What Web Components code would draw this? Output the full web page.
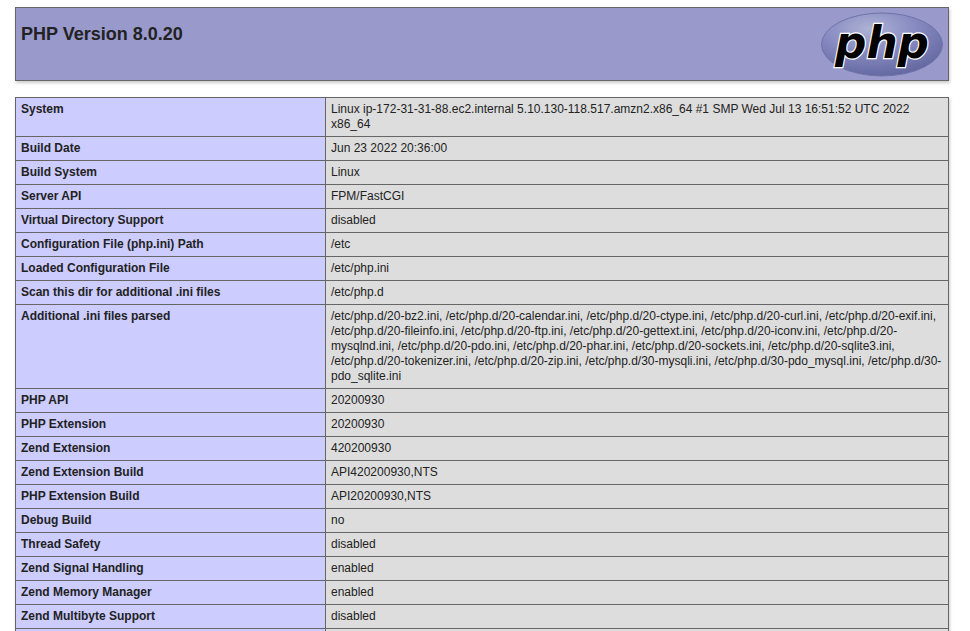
<!DOCTYPE html>
<html><head><meta charset="utf-8"><title>phpinfo()</title>
<style>
html,body{margin:0;padding:0;background:#fff;height:631px;overflow:hidden}
body{color:#222;font:12px/15px "Liberation Sans",Arial,sans-serif}
</style></head><body>
<php-page>
<php-header version="PHP Version 8.0.20"></php-header>
<php-table>
<php-row k="System">Linux ip-172-31-31-88.ec2.internal 5.10.130-118.517.amzn2.x86_64 #1 SMP Wed Jul 13 16:51:52 UTC 2022 x86_64</php-row>
<php-row k="Build Date">Jun 23 2022 20:36:00</php-row>
<php-row k="Build System">Linux</php-row>
<php-row k="Server API">FPM/FastCGI</php-row>
<php-row k="Virtual Directory Support">disabled</php-row>
<php-row k="Configuration File (php.ini) Path">/etc</php-row>
<php-row k="Loaded Configuration File">/etc/php.ini</php-row>
<php-row k="Scan this dir for additional .ini files">/etc/php.d</php-row>
<php-row k="Additional .ini files parsed">/etc/php.d/20-bz2.ini, /etc/php.d/20-calendar.ini, /etc/php.d/20-ctype.ini, /etc/php.d/20-curl.ini, /etc/php.d/20-exif.ini, /etc/php.d/20-fileinfo.ini, /etc/php.d/20-ftp.ini, /etc/php.d/20-gettext.ini, /etc/php.d/20-iconv.ini, /etc/php.d/20-mysqlnd.ini, /etc/php.d/20-pdo.ini, /etc/php.d/20-phar.ini, /etc/php.d/20-sockets.ini, /etc/php.d/20-sqlite3.ini, /etc/php.d/20-tokenizer.ini, /etc/php.d/20-zip.ini, /etc/php.d/30-mysqli.ini, /etc/php.d/30-pdo_mysql.ini, /etc/php.d<wbr>/30-pdo_sqlite.ini</php-row>
<php-row k="PHP API">20200930</php-row>
<php-row k="PHP Extension">20200930</php-row>
<php-row k="Zend Extension">420200930</php-row>
<php-row k="Zend Extension Build">API420200930,NTS</php-row>
<php-row k="PHP Extension Build">API20200930,NTS</php-row>
<php-row k="Debug Build">no</php-row>
<php-row k="Thread Safety">disabled</php-row>
<php-row k="Zend Signal Handling">enabled</php-row>
<php-row k="Zend Memory Manager">enabled</php-row>
<php-row k="Zend Multibyte Support">disabled</php-row>
<php-row k="IPv6 Support">enabled</php-row>
</php-table>
</php-page>
<script>
function def(name, html, init){
  customElements.define(name, class extends HTMLElement{
    connectedCallback(){
      if(this.shadowRoot) return;
      const r=this.attachShadow({mode:'open'});
      r.innerHTML=html(this);
    }
  });
}
def('php-page',()=>`<style>:host{display:flex;flex-direction:column;gap:16px;width:934px;padding:7px 0 0 15px}</style><slot></slot>`);
def('php-header',h=>`<style>
:host{display:flex;justify-content:space-between;align-items:flex-start;box-sizing:border-box;height:74px;background:#99c;border:1px solid #666;box-shadow:1px 2px 3px #ccc;padding:4px 5px}
h1{margin:12px 0 0;font-size:18px;line-height:21px;font-weight:bold;color:#222}
svg{display:block;margin-right:0}
</style><h1>${h.getAttribute('version')}</h1>
<svg width="122" height="65" viewBox="0 0 122 65" aria-label="PHP logo">
<defs><radialGradient id="g" cx="0.4" cy="0.25" r="0.85"><stop offset="0" stop-color="#aeb2d5"/><stop offset="0.45" stop-color="#868ac0"/><stop offset="1" stop-color="#5c6099"/></radialGradient></defs>
<ellipse cx="61" cy="32.5" rx="60.5" ry="31.5" fill="url(#g)" stroke="#6f74a8" stroke-width="1"/>
<text x="61" y="46" text-anchor="middle" font-family="'DejaVu Sans',sans-serif" font-weight="bold" font-style="italic" font-size="45" textLength="94" lengthAdjust="spacingAndGlyphs" fill="#000" stroke="#fff" stroke-width="2.4" paint-order="stroke">php</text>
</svg>`);
def('php-table',()=>`<style>:host{display:block;border:1px solid #666;border-bottom:0;box-shadow:1px 2px 3px #ccc}</style><slot></slot>`);
def('php-row',h=>`<style>
:host{display:grid;grid-template-columns:310px 1fr;border-bottom:1px solid #666}
div{padding:4px 5px;min-width:0}
.e{background:#ccf;font-weight:bold;border-right:1px solid #666}
.v{background:#ddd;overflow-wrap:break-word}
</style><div class="e">${h.getAttribute('k')}</div><div class="v"><slot></slot></div>`);
</script>
</body></html>
